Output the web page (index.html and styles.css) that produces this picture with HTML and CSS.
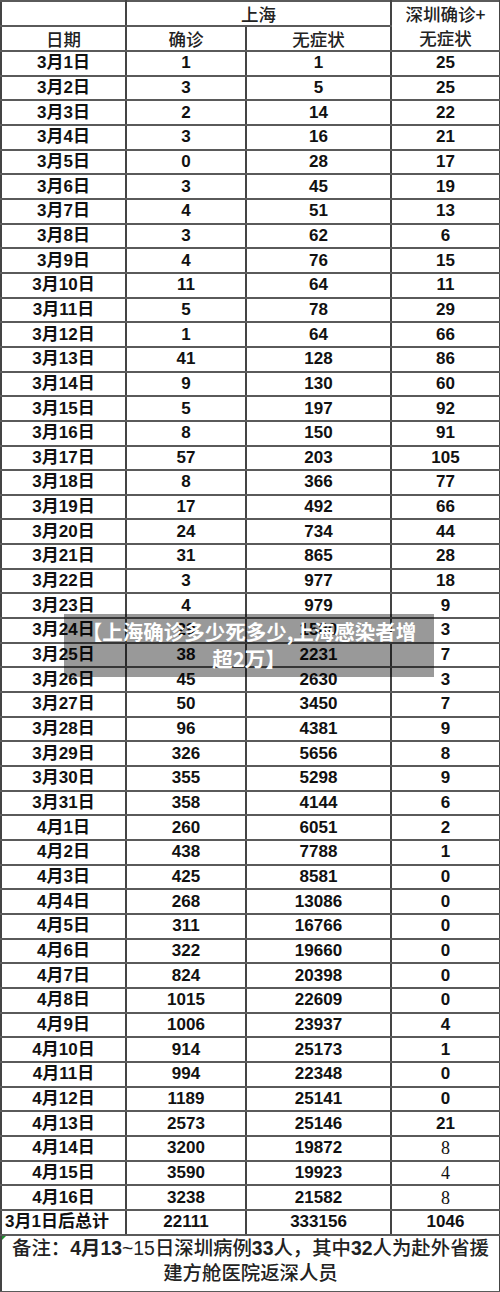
FILE: index.html
```html
<!DOCTYPE html>
<html lang="zh-CN">
<head>
<meta charset="utf-8">
<link rel="stylesheet" href="styles.css">
</head>
<body>
<div class="page">
<table class="data">
<colgroup><col class="c1"><col class="c2"><col class="c3"><col class="c4"></colgroup>
<thead>
<tr class="hr"><th></th><th colspan="2">上海</th><th rowspan="2" class="sz">深圳确诊+<br>无症状</th></tr>
<tr class="hr"><th>日期</th><th>确诊</th><th>无症状</th></tr>
</thead>
<tbody>
<tr><td>3月1日</td><td>1</td><td>1</td><td>25</td></tr>
<tr><td>3月2日</td><td>3</td><td>5</td><td>25</td></tr>
<tr><td>3月3日</td><td>2</td><td>14</td><td>22</td></tr>
<tr><td>3月4日</td><td>3</td><td>16</td><td>21</td></tr>
<tr><td>3月5日</td><td>0</td><td>28</td><td>17</td></tr>
<tr><td>3月6日</td><td>3</td><td>45</td><td>19</td></tr>
<tr><td>3月7日</td><td>4</td><td>51</td><td>13</td></tr>
<tr><td>3月8日</td><td>3</td><td>62</td><td>6</td></tr>
<tr><td>3月9日</td><td>4</td><td>76</td><td>15</td></tr>
<tr><td>3月10日</td><td>11</td><td>64</td><td>11</td></tr>
<tr><td>3月11日</td><td>5</td><td>78</td><td>29</td></tr>
<tr><td>3月12日</td><td>1</td><td>64</td><td>66</td></tr>
<tr><td>3月13日</td><td>41</td><td>128</td><td>86</td></tr>
<tr><td>3月14日</td><td>9</td><td>130</td><td>60</td></tr>
<tr><td>3月15日</td><td>5</td><td>197</td><td>92</td></tr>
<tr><td>3月16日</td><td>8</td><td>150</td><td>91</td></tr>
<tr><td>3月17日</td><td>57</td><td>203</td><td>105</td></tr>
<tr><td>3月18日</td><td>8</td><td>366</td><td>77</td></tr>
<tr><td>3月19日</td><td>17</td><td>492</td><td>66</td></tr>
<tr><td>3月20日</td><td>24</td><td>734</td><td>44</td></tr>
<tr><td>3月21日</td><td>31</td><td>865</td><td>28</td></tr>
<tr><td>3月22日</td><td>3</td><td>977</td><td>18</td></tr>
<tr><td>3月23日</td><td>4</td><td>979</td><td>9</td></tr>
<tr><td>3月24日</td><td>29</td><td>1580</td><td>3</td></tr>
<tr><td>3月25日</td><td>38</td><td>2231</td><td>7</td></tr>
<tr><td>3月26日</td><td>45</td><td>2630</td><td>3</td></tr>
<tr><td>3月27日</td><td>50</td><td>3450</td><td>7</td></tr>
<tr><td>3月28日</td><td>96</td><td>4381</td><td>9</td></tr>
<tr><td>3月29日</td><td>326</td><td>5656</td><td>8</td></tr>
<tr><td>3月30日</td><td>355</td><td>5298</td><td>9</td></tr>
<tr><td>3月31日</td><td>358</td><td>4144</td><td>6</td></tr>
<tr><td>4月1日</td><td>260</td><td>6051</td><td>2</td></tr>
<tr><td>4月2日</td><td>438</td><td>7788</td><td>1</td></tr>
<tr><td>4月3日</td><td>425</td><td>8581</td><td>0</td></tr>
<tr><td>4月4日</td><td>268</td><td>13086</td><td>0</td></tr>
<tr><td>4月5日</td><td>311</td><td>16766</td><td>0</td></tr>
<tr><td>4月6日</td><td>322</td><td>19660</td><td>0</td></tr>
<tr><td>4月7日</td><td>824</td><td>20398</td><td>0</td></tr>
<tr><td>4月8日</td><td>1015</td><td>22609</td><td>0</td></tr>
<tr><td>4月9日</td><td>1006</td><td>23937</td><td>4</td></tr>
<tr><td>4月10日</td><td>914</td><td>25173</td><td>1</td></tr>
<tr><td>4月11日</td><td>994</td><td>22348</td><td>0</td></tr>
<tr><td>4月12日</td><td>1189</td><td>25141</td><td>0</td></tr>
<tr><td>4月13日</td><td>2573</td><td>25146</td><td>21</td></tr>
<tr><td>4月14日</td><td>3200</td><td>19872</td><td class="serif">8</td></tr>
<tr><td>4月15日</td><td>3590</td><td>19923</td><td class="serif">4</td></tr>
<tr><td>4月16日</td><td>3238</td><td>21582</td><td class="serif">8</td></tr>
<tr><td class="total">3月1日后总计</td><td>22111</td><td>333156</td><td>1046</td></tr>
<tr class="note-row"><td colspan="4" class="note"><span class="tri"></span>备注：<b>4月13</b>~15日深圳病例<b>33</b>人，其中<b>32</b>人为赴外省援<br>建方舱医院返深人员</td></tr>
</tbody>
</table>
<div class="overlay">【上海确诊多少死多少,上海感染者增<br>超2万】</div>
</div>
</body>
</html>
```

FILE: styles.css
```css
html, body {
  margin: 0;
  padding: 0;
  background: #ffffff;
}

.page {
  position: relative;
  width: 500px;
  height: 1292px;
}

.data {
  border-collapse: collapse;
  table-layout: fixed;
  width: 499px;
  color: #111;
}

.c1 { width: 125px; }
.c2 { width: 120px; }
.c3 { width: 145px; }
.c4 { width: 109px; }

.data th,
.data td {
  border-top: 2px solid #5a5a5a;
  border-bottom: 2px solid #5a5a5a;
  border-left: 2px solid #444;
  border-right: 2px solid #444;
  padding: 0;
  text-align: center;
  vertical-align: middle;
}

.data tr {
  height: 24.66px;
}

.data th {
  font-family: "Noto Sans CJK SC", sans-serif;
  font-weight: 500;
  font-size: 17.5px;
  line-height: 22px;
  color: #222;
}

.data th.sz {
  line-height: 24px;
}

.data td {
  font-family: "Liberation Sans", "Noto Sans CJK SC", sans-serif;
  font-weight: 700;
  font-size: 17px;
  line-height: 20px;
}

.data td.serif {
  font-family: "Liberation Serif", serif;
  font-weight: 400;
  font-size: 18px;
}

.data td.total {
  text-align: left;
  padding-left: 3px;
  letter-spacing: 0;
}

.data .note-row {
  height: 57px;
}

.data td.note {
  position: relative;
  font-family: "Liberation Sans", "Noto Sans CJK SC", sans-serif;
  font-weight: 500;
  font-size: 19.4px;
  line-height: 25px;
  color: #222;
  padding-bottom: 4px;
  white-space: nowrap;
}

.data td.note b {
  font-weight: 700;
}

.tri {
  position: absolute;
  left: 0;
  top: 0;
  width: 0;
  height: 0;
  border-top: 4px solid #1f8f2f;
  border-right: 4px solid transparent;
}

.overlay {
  position: absolute;
  left: 64px;
  top: 614px;
  width: 370px;
  height: 63px;
  box-sizing: border-box;
  padding-top: 4px;
  background: rgba(0, 0, 0, 0.4);
  color: #ffffff;
  font-family: "Noto Sans CJK SC", sans-serif;
  font-weight: 700;
  font-size: 20.5px;
  line-height: 27px;
  text-align: center;
  letter-spacing: 0;
  white-space: nowrap;
}
```
